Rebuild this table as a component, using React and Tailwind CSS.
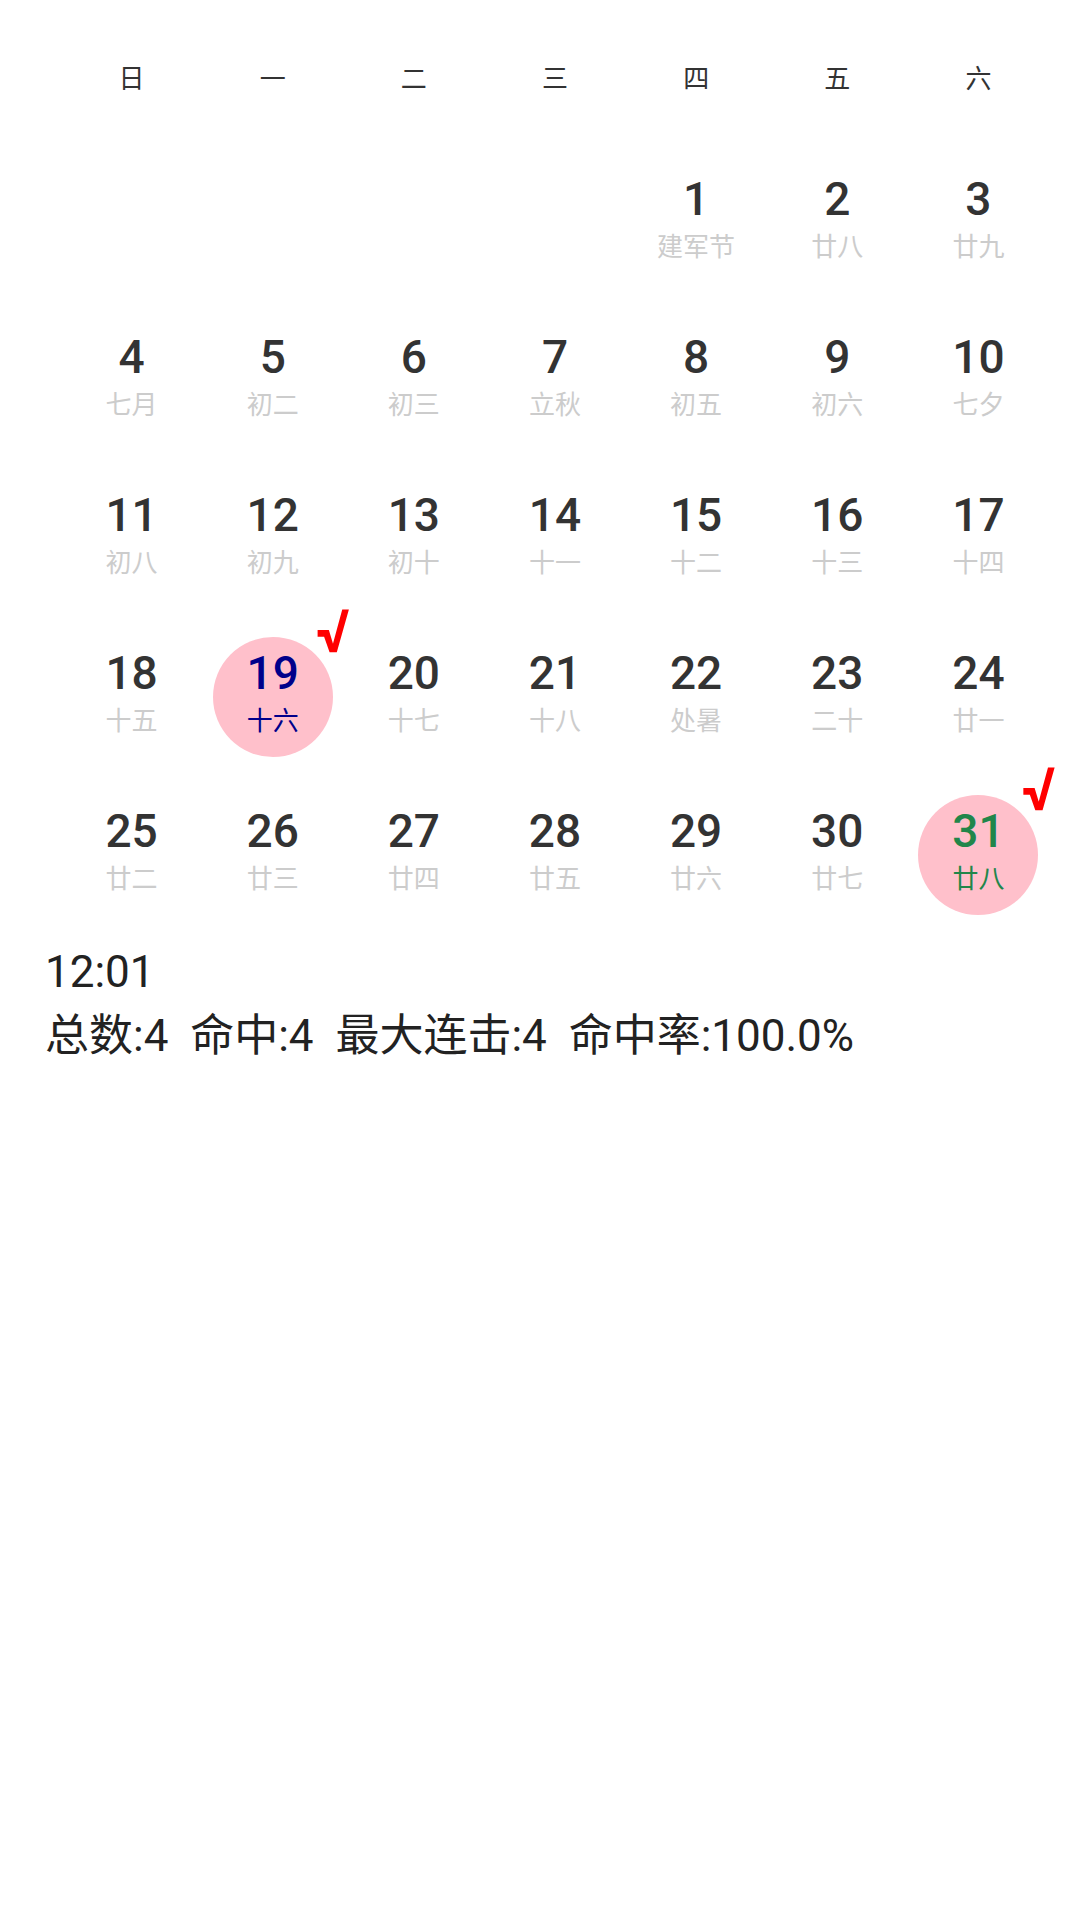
import React from 'react'

const WEEK = ['日', '一', '二', '三', '四', '五', '六']

const DAYS = [
  null, null, null, null,
  { d: 1, l: '建军节' }, { d: 2, l: '廿八' }, { d: 3, l: '廿九' },
  { d: 4, l: '七月' }, { d: 5, l: '初二' }, { d: 6, l: '初三' }, { d: 7, l: '立秋' },
  { d: 8, l: '初五' }, { d: 9, l: '初六' }, { d: 10, l: '七夕' },
  { d: 11, l: '初八' }, { d: 12, l: '初九' }, { d: 13, l: '初十' }, { d: 14, l: '十一' },
  { d: 15, l: '十二' }, { d: 16, l: '十三' }, { d: 17, l: '十四' },
  { d: 18, l: '十五' }, { d: 19, l: '十六', mark: 'blue' }, { d: 20, l: '十七' }, { d: 21, l: '十八' },
  { d: 22, l: '处暑' }, { d: 23, l: '二十' }, { d: 24, l: '廿一' },
  { d: 25, l: '廿二' }, { d: 26, l: '廿三' }, { d: 27, l: '廿四' }, { d: 28, l: '廿五' },
  { d: 29, l: '廿六' }, { d: 30, l: '廿七' }, { d: 31, l: '廿八', mark: 'green' },
]

const DayCell = ({ day }) => {
  if (!day) return <div className="h-[158px]" />
  const marked = !!day.mark
  const numColor = day.mark === 'blue' ? 'text-[#00008b]' : day.mark === 'green' ? 'text-[#21864a]' : 'text-[#333333]'
  const lunarColor = day.mark === 'blue' ? 'text-[#00008b]' : day.mark === 'green' ? 'text-[#21864a]' : 'text-[#cccccc]'

  return (
    <div className="h-[158px] flex items-center justify-center">
      <div className={`relative w-[120px] h-[120px] rounded-full flex flex-col items-center justify-center ${marked ? 'bg-[#ffc0cb]' : ''}`}>
        <span className={`text-[46px] leading-[48px] font-medium ${numColor}`}>{day.d}</span>
        <span className={`text-[26px] leading-[48px] ${lunarColor}`}>{day.l}</span>
        {marked && (
          <span className="absolute left-[103px] top-[-35px] text-[60px] leading-none font-bold text-[#ff0000]">√</span>
        )}
      </div>
    </div>
  )
}

export default function App() {
  return (
    <div className="w-[1080px] h-[1920px] bg-white font-['Roboto','Noto_Sans_CJK_SC',sans-serif]">
      <div className="pl-[61px] pr-[31px]">
        <div className="grid grid-cols-7 h-[144px] pt-[14px] items-center">
          {WEEK.map(w => (
            <div key={w} className="text-center text-[26px] text-[#333333]">{w}</div>
          ))}
        </div>
        <div className="grid grid-cols-7">
          {DAYS.map((d, i) => <DayCell key={i} day={d} />)}
        </div>
      </div>
      <div className="pl-[45px] mt-[6px] text-[44px] leading-[64px] text-[#222222]">
        <div>12:01</div>
        <div className="whitespace-pre">总数:4  命中:4  最大连击:4  命中率:100.0%</div>
      </div>
    </div>
  )
}
